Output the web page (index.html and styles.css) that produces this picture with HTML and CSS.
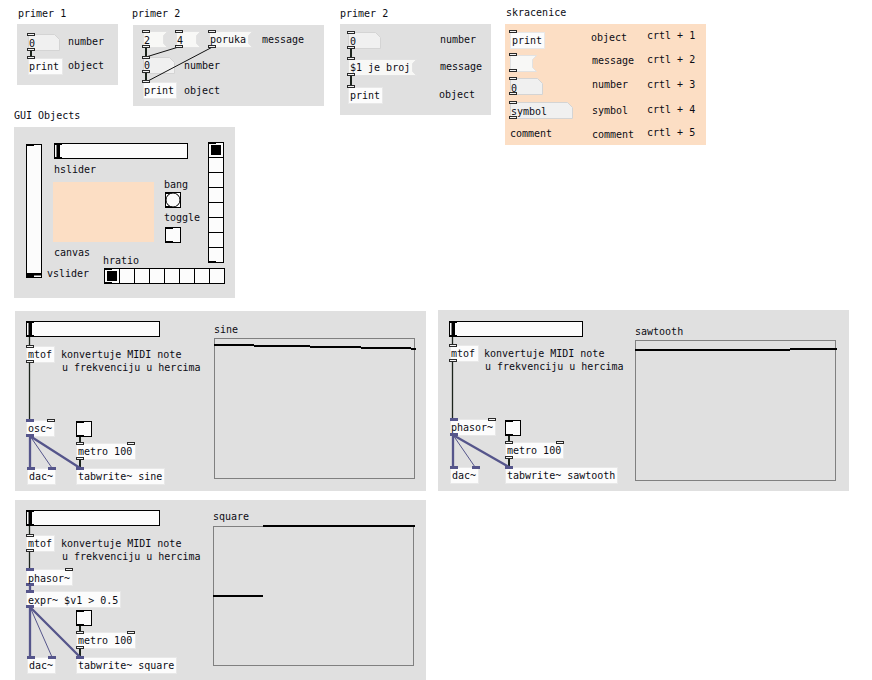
FILE: index.html
```html
<!DOCTYPE html>
<html lang="en">
<head>
    <meta charset="UTF-8">
    <title>Pure Data objects</title>
    <link rel="stylesheet" href="styles.css">
</head>
<body>
<svg class="desktop" width="872" height="680" viewBox="0 0 872 680">
    <defs>
        <g id="hslider">
            <rect class="gui" x="0.5" y="0.5" width="133" height="15"/>
            <rect class="ink" x="0" y="0" width="8" height="2"/>
            <rect class="ink" x="0" y="14" width="8" height="2"/>
            <rect class="ink" x="2.5" y="0" width="3.5" height="16"/>
        </g>
        <g id="toggle">
            <rect class="gui" x="0.5" y="0.5" width="15" height="15"/>
            <rect class="ink" x="0" y="0" width="8" height="2"/>
            <rect class="ink" x="0" y="14" width="8" height="2"/>
        </g>
    </defs>

    <!-- primer 1 -->
    <text class="label" x="18" y="17">primer 1</text>
    <rect class="panel" x="17" y="24" width="101" height="61"/>
    <polygon class="num" points="28.5,34.5 54.5,34.5 59.5,39.5 59.5,50.5 28.5,50.5"/>
    <rect class="obj" x="28.5" y="58.5" width="34" height="16"/>
    <path class="wire" d="M31 50V58"/>
    <rect class="port" x="27.5" y="33.5"/><rect class="port" x="27.5" y="48.5"/><rect class="port" x="27.5" y="56.5"/>
    <text class="label" x="29" y="47">0</text>
    <text class="label" x="29" y="70">print</text>
    <text class="label" x="68" y="45">number</text>
    <text class="label" x="68" y="69">object</text>

    <!-- primer 2, message -->
    <text class="label" x="132" y="17">primer 2</text>
    <rect class="panel" x="133" y="25" width="191" height="81"/>
    <polygon class="msg" points="143.5,31.5 167.5,31.5 163.5,35.5 163.5,43.5 167.5,47.5 143.5,47.5"/>
    <polygon class="msg" points="176.5,31.5 200.5,31.5 196.5,35.5 196.5,43.5 200.5,47.5 176.5,47.5"/>
    <polygon class="msg" points="209.5,31.5 252.5,31.5 248.5,35.5 248.5,43.5 252.5,47.5 209.5,47.5"/>
    <polygon class="num" points="143.5,57.5 169.5,57.5 174.5,62.5 174.5,73.5 143.5,73.5"/>
    <rect class="obj" x="143.5" y="82.5" width="33" height="16"/>
    <path class="wire" d="M146 48V57M146 73V82"/>
    <path class="thin" d="M178.5 47L146 57M212.5 47L146 82"/>
    <rect class="port" x="142.5" y="30.5"/><rect class="port" x="142.5" y="45.5"/>
    <rect class="port" x="175.5" y="30.5"/><rect class="port" x="175.5" y="45.5"/>
    <rect class="port" x="208.5" y="30.5"/><rect class="port" x="208.5" y="45.5"/>
    <rect class="port" x="142.5" y="56.5"/><rect class="port" x="142.5" y="70.5"/><rect class="port" x="142.5" y="80.5"/>
    <text class="label" x="144" y="44">2</text>
    <text class="label" x="177" y="44">4</text>
    <text class="label" x="210" y="43">poruka</text>
    <text class="label" x="144" y="69">0</text>
    <text class="label" x="144" y="94">print</text>
    <text class="label" x="262" y="43">message</text>
    <text class="label" x="184" y="69">number</text>
    <text class="label" x="184" y="94">object</text>

    <!-- primer 2, dollar arg -->
    <text class="label" x="340" y="17">primer 2</text>
    <rect class="panel" x="340" y="24" width="151" height="91"/>
    <polygon class="num" points="348.5,32.5 375.5,32.5 380.5,37.5 380.5,48.5 348.5,48.5"/>
    <polygon class="msg" points="348.5,59.5 416.5,59.5 412.5,63.5 412.5,71.5 416.5,75.5 348.5,75.5"/>
    <rect class="obj" x="348.5" y="87.5" width="34" height="16"/>
    <path class="wire" d="M351 48V59M351 75V87"/>
    <rect class="port" x="347.5" y="31.5"/><rect class="port" x="347.5" y="46.5"/>
    <rect class="port" x="347.5" y="57.5"/><rect class="port" x="347.5" y="73.5"/><rect class="port" x="347.5" y="85.5"/>
    <text class="label" x="350" y="45">0</text>
    <text class="label" x="350" y="71">$1 je broj</text>
    <text class="label" x="350" y="99">print</text>
    <text class="label" x="440" y="43">number</text>
    <text class="label" x="440" y="70">message</text>
    <text class="label" x="439" y="98">object</text>

    <!-- skracenice -->
    <text class="label" x="506" y="16">skracenice</text>
    <rect class="peach" x="505" y="24" width="201" height="121"/>
    <rect class="obj" x="510.5" y="32.5" width="34" height="16"/>
    <polygon class="msg" points="510.5,55.5 536.5,55.5 532.5,59.5 532.5,67.5 536.5,71.5 510.5,71.5"/>
    <polygon class="num" points="510.5,78.5 537.5,78.5 542.5,83.5 542.5,94.5 510.5,94.5"/>
    <polygon class="num" points="510.5,102.5 567.5,102.5 572.5,107.5 572.5,118.5 510.5,118.5"/>
    <rect class="port" x="509.5" y="30.5"/>
    <rect class="port" x="509.5" y="53.5"/><rect class="port" x="509.5" y="69.5"/>
    <rect class="port" x="509.5" y="77.5"/><rect class="port" x="509.5" y="92.5"/>
    <rect class="port" x="509.5" y="101.5"/><rect class="port" x="509.5" y="116.5"/>
    <text class="label" x="512" y="44">print</text>
    <text class="label" x="511" y="92">0</text>
    <text class="label" x="511" y="115">symbol</text>
    <text class="label" x="510" y="137">comment</text>
    <text class="label" x="591" y="41">object</text>
    <text class="label" x="592" y="64">message</text>
    <text class="label" x="592" y="88">number</text>
    <text class="label" x="592" y="114">symbol</text>
    <text class="label" x="592" y="138">comment</text>
    <text class="label" x="647" y="39">crtl + 1</text>
    <text class="label" x="647" y="63">crtl + 2</text>
    <text class="label" x="647" y="88">crtl + 3</text>
    <text class="label" x="647" y="113">crtl + 4</text>
    <text class="label" x="647" y="136">crtl + 5</text>

    <!-- GUI objects -->
    <text class="label" x="14" y="119">GUI Objects</text>
    <rect class="panel" x="14" y="127" width="221" height="171"/>
    <rect class="gui" x="26.5" y="144.5" width="15" height="133"/>
    <rect class="ink" x="26" y="144" width="8" height="2"/>
    <rect class="ink" x="26" y="273" width="16" height="2.5"/>
    <rect class="ink" x="26" y="275" width="8" height="3"/>
    <use href="#hslider" x="54" y="143"/>
    <rect class="peach" x="53" y="182" width="101" height="60"/>
    <use href="#toggle" x="165" y="192"/>
    <circle class="gui" cx="173" cy="200" r="7"/>
    <use href="#toggle" x="165" y="227"/>
    <!-- vradio -->
    <rect class="gui" x="208.5" y="142.5" width="15" height="120"/>
    <path class="line" d="M208 157.5H224M208 172.5H224M208 187.5H224M208 202.5H224M208 217.5H224M208 232.5H224M208 247.5H224"/>
    <rect class="ink" x="208" y="142" width="8" height="2"/>
    <rect class="ink" x="208" y="261" width="8" height="2"/>
    <rect class="ink" x="211" y="145" width="10" height="10"/>
    <!-- hradio -->
    <rect class="gui" x="104.5" y="268.5" width="120" height="15"/>
    <path class="line" d="M119.5 268V284M134.5 268V284M149.5 268V284M164.5 268V284M179.5 268V284M194.5 268V284M209.5 268V284"/>
    <rect class="ink" x="104" y="268" width="8" height="2"/>
    <rect class="ink" x="104" y="282" width="8" height="2"/>
    <rect class="ink" x="107" y="271" width="10" height="10"/>
    <text class="label" x="54" y="173">hslider</text>
    <text class="label" x="164" y="188">bang</text>
    <text class="label" x="164" y="221">toggle</text>
    <text class="label" x="54" y="256">canvas</text>
    <text class="label" x="103" y="264">hratio</text>
    <text class="label" x="47" y="277">vslider</text>

    <!-- sine -->
    <rect class="panel" x="15" y="311" width="411" height="180"/>
    <use href="#hslider" x="26" y="321"/>
    <rect class="obj" x="26.5" y="346.5" width="28" height="16"/>
    <rect class="obj" x="26.5" y="420.5" width="28" height="16"/>
    <use href="#toggle" x="76" y="421"/>
    <rect class="obj" x="76.5" y="443.5" width="59" height="16"/>
    <rect class="obj" x="27.5" y="468.5" width="28" height="16"/>
    <rect class="obj" x="76.5" y="468.5" width="88" height="16"/>
    <path class="wire" d="M80 437V443M80 459V468"/>
    <path class="longwire" d="M29.5 337V346M29.5 362V420"/>
    <path class="sigwire" d="M30 436V468M30 436L80 468"/>
    <path class="sigthin" d="M30 436L52 468"/>
    <rect class="port" x="26.5" y="345.5"/><rect class="port" x="26.5" y="360.5"/>
    <rect class="sig" x="26" y="419"/><rect class="port" x="47.5" y="419.5"/><rect class="sig" x="26" y="434"/>
    <rect class="port" x="76.5" y="442.5"/><rect class="port" x="127.5" y="442.5"/><rect class="port" x="76.5" y="457.5"/>
    <rect class="sig" x="27" y="467"/><rect class="sig" x="48" y="467"/><rect class="sig" x="76" y="467"/>
    <text class="label" x="28" y="358">mtof</text>
    <text class="label" x="61" y="358">konvertuje MIDI note</text>
    <text class="label" x="62" y="371">u frekvenciju u hercima</text>
    <text class="label" x="28" y="432">osc~</text>
    <text class="label" x="78" y="455">metro 100</text>
    <text class="label" x="29" y="480">dac~</text>
    <text class="label" x="78" y="480">tabwrite~ sine</text>
    <text class="label" x="214" y="333">sine</text>
    <rect class="graph" x="214.5" y="338.5" width="200" height="140"/>
    <path class="wave" d="M214 345H254M254 346H310M310 347H361M361 348H411M411 349H416"/>

    <!-- sawtooth -->
    <rect class="panel" x="438" y="310" width="411" height="181"/>
    <use href="#hslider" x="449" y="321"/>
    <rect class="obj" x="450.5" y="345.5" width="28" height="16"/>
    <rect class="obj" x="450.5" y="419.5" width="45" height="16"/>
    <use href="#toggle" x="505" y="420"/>
    <rect class="obj" x="505.5" y="442.5" width="58" height="16"/>
    <rect class="obj" x="450.5" y="467.5" width="28" height="16"/>
    <rect class="obj" x="505.5" y="467.5" width="112" height="16"/>
    <path class="wire" d="M509 436V442M509 458V467"/>
    <path class="longwire" d="M452.5 337V345M452.5 361V419"/>
    <path class="sigwire" d="M453 435V467M453 435L509 467"/>
    <path class="sigthin" d="M453 435L475 467"/>
    <rect class="port" x="449.5" y="344.5"/><rect class="port" x="449.5" y="359.5"/>
    <rect class="sig" x="450" y="418"/><rect class="port" x="488.5" y="418.5"/><rect class="sig" x="450" y="433"/>
    <rect class="port" x="505.5" y="441.5"/><rect class="port" x="556.5" y="441.5"/><rect class="port" x="505.5" y="456.5"/>
    <rect class="sig" x="450" y="466"/><rect class="sig" x="472" y="466"/><rect class="sig" x="505" y="466"/>
    <text class="label" x="451" y="357">mtof</text>
    <text class="label" x="484" y="357">konvertuje MIDI note</text>
    <text class="label" x="485" y="370">u frekvenciju u hercima</text>
    <text class="label" x="451" y="431">phasor~</text>
    <text class="label" x="507" y="454">metro 100</text>
    <text class="label" x="452" y="479">dac~</text>
    <text class="label" x="507" y="479">tabwrite~ sawtooth</text>
    <text class="label" x="635" y="335">sawtooth</text>
    <rect class="graph" x="635.5" y="340.5" width="200" height="140"/>
    <path class="wave" d="M635 350H790M790 349H837"/>

    <!-- square -->
    <rect class="panel" x="15" y="500" width="411" height="180"/>
    <use href="#hslider" x="26" y="510"/>
    <rect class="obj" x="26.5" y="535.5" width="28" height="16"/>
    <rect class="obj" x="26.5" y="569.5" width="46" height="16"/>
    <rect class="obj" x="26.5" y="591.5" width="94" height="16"/>
    <use href="#toggle" x="76" y="610"/>
    <rect class="obj" x="76.5" y="632.5" width="59" height="16"/>
    <rect class="obj" x="27.5" y="657.5" width="28" height="16"/>
    <rect class="obj" x="76.5" y="657.5" width="100" height="16"/>
    <path class="wire" d="M80 626V632M80 648V657"/>
    <path class="longwire" d="M29.5 526V535M29.5 551V569"/>
    <path class="sigwire" d="M30 585V592M30 607V657M30 607L80 657"/>
    <path class="sigthin" d="M30 607L52 657"/>
    <rect class="port" x="26.5" y="534.5"/><rect class="port" x="26.5" y="549.5"/>
    <rect class="sig" x="26" y="568"/><rect class="port" x="65.5" y="568.5"/><rect class="sig" x="26" y="583"/>
    <rect class="sig" x="26" y="590"/><rect class="sig" x="26" y="605"/>
    <rect class="port" x="76.5" y="631.5"/><rect class="port" x="127.5" y="631.5"/><rect class="port" x="76.5" y="646.5"/>
    <rect class="sig" x="27" y="656"/><rect class="sig" x="48" y="656"/><rect class="sig" x="76" y="656"/>
    <text class="label" x="28" y="547">mtof</text>
    <text class="label" x="61" y="547">konvertuje MIDI note</text>
    <text class="label" x="62" y="560">u frekvenciju u hercima</text>
    <text class="label" x="28" y="582">phasor~</text>
    <text class="label" x="28" y="604">expr~ $v1 &gt; 0.5</text>
    <text class="label" x="78" y="644">metro 100</text>
    <text class="label" x="29" y="669">dac~</text>
    <text class="label" x="78" y="669">tabwrite~ square</text>
    <text class="label" x="213" y="520">square</text>
    <rect class="graph" x="213.5" y="526.5" width="200" height="139"/>
    <path class="wave" d="M213 596H263M263 526H415"/>
</svg>
</body>
</html>
```

FILE: styles.css
```css
body {
    margin: 0;
    background: #ffffff;
}

.desktop {
    display: block;
}

.label {
    font-family: "DejaVu Sans Mono", monospace;
    font-size: 10px;
    fill: #0c0c14;
}

.panel {
    fill: #e0e0e0;
}

.peach {
    fill: #fcdec4;
}

.obj {
    fill: #fcfcfc;
    stroke: #e8e8e8;
}

.msg {
    fill: #f8f8f6;
    stroke: #e2e2e2;
}

.num {
    fill: #f0f0f0;
    stroke: #d4d4d4;
}

.gui {
    fill: #fcfcfc;
    stroke: #000000;
}

.ink {
    fill: #000000;
}

.line {
    fill: none;
    stroke: #000000;
}

.port {
    width: 7px;
    height: 2px;
    fill: #f4f4f4;
    stroke: #2a2a2a;
}

.sig {
    width: 8px;
    height: 3px;
    fill: #55558b;
}

.wire {
    fill: none;
    stroke: #1c241c;
    stroke-width: 2px;
}

.longwire {
    fill: none;
    stroke: #1c241c;
    stroke-width: 1.3px;
}

.thin {
    fill: none;
    stroke: #111111;
    stroke-width: 1px;
}

.sigwire {
    fill: none;
    stroke: #55558b;
    stroke-width: 2.3px;
}

.sigthin {
    fill: none;
    stroke: #55558b;
    stroke-width: 1px;
}

.graph {
    fill: none;
    stroke: #808080;
}

.wave {
    fill: none;
    stroke: #000000;
    stroke-width: 2px;
}
```
